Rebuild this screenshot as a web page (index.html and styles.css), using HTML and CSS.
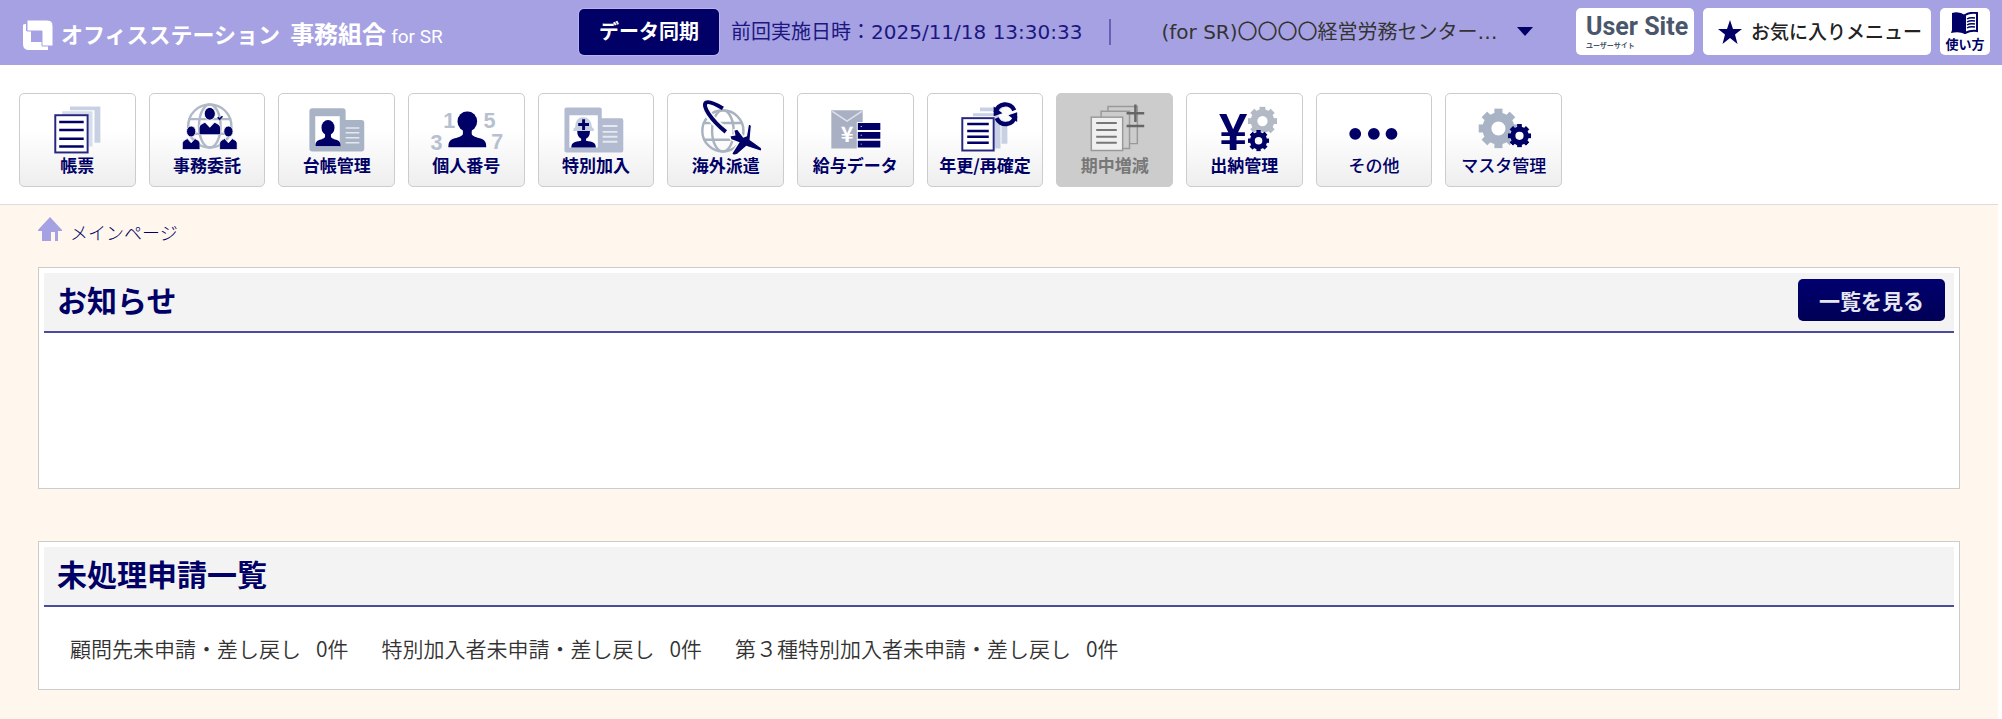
FILE: index.html
```html
<!DOCTYPE html>
<html lang="ja">
  <head>
    <meta charset="UTF-8" />
    <meta name="viewport" content="width=device-width, initial-scale=1.0" />
    <title>オフィスステーション 事務組合</title>
    <link rel="stylesheet" href="styles.css">
  </head>

  <body>
    <svg class="defs" aria-hidden="true">
      <symbol id="gear" viewBox="-20 -20 40 40" overflow="visible">
        <circle r="11.500" fill="none" stroke="currentColor" stroke-width="9" />
        <g fill="currentColor">
          <rect x="-4" y="-20" width="8" height="40" clip-path="url(#teeth)" />
          <rect x="-4" y="-20" width="8" height="40" clip-path="url(#teeth)" transform="rotate(45)" />
          <rect x="-4" y="-20" width="8" height="40" clip-path="url(#teeth)" transform="rotate(90)" />
          <rect x="-4" y="-20" width="8" height="40" clip-path="url(#teeth)" transform="rotate(135)" />
        </g>
      </symbol>
      <clipPath id="teeth">
        <rect x="-20" y="-20" width="40" height="7" />
        <rect x="-20" y="13" width="40" height="7" />
      </clipPath>
      <symbol id="person" viewBox="0 0 39 37" preserveAspectRatio="none">
        <ellipse cx="19.5" cy="10.5" rx="10" ry="10.5" />
        <path d="M15 18v5c0 2-3 3-6 4-6 1-9 3-9 10h39c0-7-3-9-9-10-3-1-6-2-6-4v-5z" />
      </symbol>
      <symbol id="worker" viewBox="0 0 21 28" preserveAspectRatio="none">
        <ellipse cx="10.5" cy="6.5" rx="5.5" ry="6.5" />
        <path d="M0 28v-7c0-3 2-4 6-6l4.500 5 4.500-5c4 2 6 3 6 6v7z" />
      </symbol>
    </svg>

    <header class="header">
      <a class="logo" href="#">
        <svg class="logo-mark" viewBox="0 0 30 30" aria-hidden="true">
          <path fill="#fff" d="M3 4v7h5v11h11v3h6v5H6q-6 0-6-6V5q0-1 3-1z" />
          <path fill="#fff" stroke="#a6a1e2" d="M4 0h20q6 0 6 6v20H19V11H4z" />
        </svg>
        <span class="logo-kana">オフィスステーション</span>
        <span class="logo-kanji">事務組合</span>
        <span class="logo-sub">for SR</span>
      </a>

      <div class="sync">
        <button type="button" class="sync-button">データ同期</button>
        <span class="sync-date">前回実施日時：2025/11/18 13:30:33</span>
      </div>

      <div class="office">
        <select class="office-select" aria-label="事務所">
          <option>(for SR)〇〇〇〇経営労務センター…</option>
        </select>
        <svg class="office-arrow" viewBox="0 0 16 9" aria-hidden="true"><path d="M0 0h16L8 9z" /></svg>
      </div>

      <div class="tools">
        <a class="tool user-site" href="#">
          <span class="user-site-en">User Site</span>
          <span class="user-site-ja">ユーザーサイト</span>
        </a>
        <button type="button" class="tool favorite">
          <svg class="star" viewBox="0 0 24 24" aria-hidden="true"><path d="M12 0l3 9h9l-7 5.500 2.500 9.500-7.500-6-7.500 6L7 14.500 0 9h9z" /></svg>
          お気に入りメニュー
        </button>
        <a class="tool guide" href="#">
          <svg class="book" viewBox="0 0 28 22" aria-hidden="true">
            <path d="M14 3Q8-1 1 1v17l-1 3q8-2 14 1z" />
            <path fill="#fff" stroke="#000066" stroke-width="2" d="M14 3q5-3 12-2v18q-6-1-12 2z" />
            <path fill="none" stroke="#000066" stroke-width="1.500" d="M16 7q3-2 8-1M16 10q3-2 8-1M16 13q3-2 8-1M16 16q3-2 8-1" />
          </svg>
          使い方
        </a>
      </div>
    </header>

    <nav class="menu">
      <a class="menu-item" href="#">
        <svg class="menu-icon" viewBox="0 0 117 56" aria-hidden="true">
          <path fill="#c8d1e4" d="M51 8h31v37h-6V12H51z" />
          <path fill="#d6ddeb" d="M43 13h31v36h-4V17H43z" />
          <rect x="36" y="17" width="33" height="38" fill="#fff" stroke="#26267f" stroke-width="2" />
          <path stroke="#000066" stroke-width="2.500" d="M40 24h25M40 32h25M40 41h25M40 49h25" />
        </svg>
        帳票
      </a>
      <a class="menu-item" href="#">
        <svg class="menu-icon" viewBox="0 0 117 56" aria-hidden="true">
          <g fill="none" stroke="#b0b9c8" stroke-width="2.500">
            <circle cx="61" cy="28" r="22" />
            <ellipse cx="61" cy="28" rx="11" ry="22" />
            <path d="M39 21h44M39 36h44" />
          </g>
          <g fill="#000066" stroke="#fafafa" stroke-width="1">
            <use href="#worker" x="50" y="9" width="22" height="28" />
            <use href="#worker" x="33" y="28" width="18" height="24" />
            <use href="#worker" x="71" y="28" width="18" height="24" />
          </g>
          <path fill="none" stroke="#000066" stroke-width="1.500" d="M69 19l2 2 3-3" />
        </svg>
        事務委託
      </a>
      <a class="menu-item" href="#">
        <svg class="menu-icon" viewBox="0 0 117 56" aria-hidden="true">
          <path fill="#a9b3c6" d="M34 10h31q3 0 3 3v9h16q3 0 3 3v26q0 3-3 3H34q-3 0-3-3V13q0-3 3-3z" />
          <path fill="#fff" d="M37 18h25v31H37z" />
          <path stroke="#e4e8ef" stroke-width="1.500" d="M68 30h14M68 35h14M68 40h14M68 45h14" />
          <use href="#person" fill="#000066" x="37" y="22" width="26" height="27" />
        </svg>
        台帳管理
      </a>
      <a class="menu-item" href="#">
        <svg class="menu-icon" viewBox="0 0 117 56" aria-hidden="true">
          <g class="icon-digits">
            <text x="41" y="30">1</text>
            <text x="82" y="30">5</text>
            <text x="28" y="52">3</text>
            <text x="90" y="51">7</text>
          </g>
          <use href="#person" fill="#000066" x="40" y="13" width="39" height="37" />
        </svg>
        個人番号
      </a>
      <a class="menu-item" href="#">
        <svg class="menu-icon" viewBox="0 0 117 56" aria-hidden="true">
          <path fill="#b3bbd0" d="M28 9h34q2 0 2 2v9h20q2 0 2 2v31q0 2-2 2H28q-2 0-2-2V11q0-2 2-2z" />
          <path fill="#fff" d="M31 17h29v33H31z" />
          <path stroke="#e6e9f0" stroke-width="2" d="M65 28h15M65 34h15M65 39h15M65 44h15" />
          <path fill="#c5cfe0" d="M35 33v-2l2-2q0-10 8-10t9 10l2 2v2z" />
          <path stroke="#000066" stroke-width="3" d="M45.500 21v11M40 26.500h11" />
          <path fill="#000066" d="M39 33h13q0 6-4 8v2c7 1 10 2 10 7H33c0-5 3-6 10-7v-2q-4-2-4-8z" />
        </svg>
        特別加入
      </a>
      <a class="menu-item" href="#">
        <svg class="menu-icon" viewBox="0 0 117 56" aria-hidden="true">
          <g fill="none" stroke="#a9b3c0" stroke-width="2.500">
            <circle cx="56" cy="33" r="21" />
            <ellipse cx="56" cy="33" rx="11" ry="21" />
            <path d="M36 25h40M36 42h40" />
          </g>
          <path fill="none" stroke="#fafafa" stroke-width="8" d="M38 8q2 12 21 25" />
          <path fill="none" stroke="#000066" stroke-width="4" d="M59 34C44 22 34 7 39 4q4-2 17 6" />
          <path fill="#000066" stroke="#fafafa" stroke-width="1.500" d="M82 26q4 0 3 4l-1 12 10 7q3 2 1 5l-15-5-9 8q-5 2-6-1l7-11-8-3-1-4 5-1-1-5 4-1 6 8 3-1z" />
        </svg>
        海外派遣
      </a>
      <a class="menu-item" href="#">
        <svg class="menu-icon" viewBox="0 0 117 56" aria-hidden="true">
          <path fill="#a9b0c4" d="M34 12h32v39H34z" />
          <path fill="none" stroke="#dfe2ea" stroke-width="1.500" d="M35 13l15 10 15-10" />
          <text class="icon-yen-small" x="50" y="44">¥</text>
          <path fill="#fff" d="M60 24h25v28H60z" />
          <path fill="#000066" d="M61 25h23v7H61zM61 34h23v7H61zM61 43h23v7H61z" />
          <path fill="#fff" d="M64 28h1v1h-1zM64 37h1v1h-1zM64 46h1v1h-1z" />
        </svg>
        給与データ
      </a>
      <a class="menu-item" href="#">
        <svg class="menu-icon" viewBox="0 0 117 56" aria-hidden="true">
          <path fill="#c8d1e4" d="M53 9h28v37h-6V13H53z" />
          <path fill="#c8d1e4" d="M46 15h28v36h-6V18H46z" />
          <rect x="35" y="20" width="32" height="33" fill="#fff" stroke="#26267f" stroke-width="2" />
          <path stroke="#000066" stroke-width="2.500" d="M40 26h22M40 33h22M40 39h22M40 45h22" />
          <circle cx="79" cy="16" r="7" fill="#fafafa" />
          <path fill="none" stroke="#000066" stroke-width="4.500" d="M69 14a10 10 0 0 1 19-2M89 18a10 10 0 0 1-19 2" />
          <path fill="#000066" d="M67 8v10l9-3zM91 24V14l-9 3z" />
        </svg>
        年更/再確定
      </a>
      <a class="menu-item disabled" aria-disabled="true">
        <svg class="menu-icon" viewBox="0 0 117 56" aria-hidden="true">
          <g fill="none" stroke="#999" stroke-width="1.500">
            <path d="M52 13V8h30v38h-8" />
            <path d="M45 19v-6h29v38h-7" />
            <rect x="35" y="19" width="32" height="34" fill="#f0f0f0" />
          </g>
          <path stroke="#777" stroke-width="2" d="M40 25h21M40 32h21M40 39h21M40 45h21" />
          <path stroke="#666" stroke-width="2.500" d="M71 15h18M80 6v18M71 28h18" />
        </svg>
        期中増減
      </a>
      <a class="menu-item" href="#">
        <svg class="menu-icon" viewBox="0 0 117 56" aria-hidden="true">
          <text class="icon-yen" x="47" y="53">¥</text>
          <use href="#gear" color="#b3bac6" x="62" y="8" width="30" height="30" />
          <circle cx="73" cy="43" r="10" fill="#fafafa" />
          <use href="#gear" color="#000066" x="62" y="32" width="22" height="22" />
        </svg>
        出納管理
      </a>
      <a class="menu-item light" href="#">
        <svg class="menu-icon" viewBox="0 0 117 56" aria-hidden="true">
          <g fill="#000066">
            <circle cx="39" cy="36" r="6" />
            <circle cx="58" cy="36" r="6" />
            <circle cx="76" cy="36" r="6" />
          </g>
        </svg>
        その他
      </a>
      <a class="menu-item light" href="#">
        <svg class="menu-icon" viewBox="0 0 117 56" aria-hidden="true">
          <use href="#gear" color="#a9b3c6" x="33" y="10" width="41" height="41" />
          <circle cx="75" cy="38" r="10" fill="#fafafa" />
          <use href="#gear" color="#000066" x="63" y="26" width="24" height="24" />
        </svg>
        マスタ管理
      </a>
    </nav>

    <main class="main">
      <div class="breadcrumb">
        <svg class="home" viewBox="0 0 24 24" aria-hidden="true"><path d="M12 0l12 13v1h-4v10h-3V15h-4v9H4V14H0v-1z" /></svg>
        <a href="#">メインページ</a>
      </div>

      <section class="panel">
        <div class="panel-head">
          <h2>お知らせ</h2>
          <button type="button" class="list-button">一覧を見る</button>
        </div>
        <div class="panel-body news"></div>
      </section>

      <section class="panel">
        <div class="panel-head">
          <h2>未処理申請一覧</h2>
        </div>
        <ul class="panel-body pending">
          <li>顧問先未申請・差し戻し<span class="count">0件</span></li>
          <li>特別加入者未申請・差し戻し<span class="count">0件</span></li>
          <li>第３種特別加入者未申請・差し戻し<span class="count">0件</span></li>
        </ul>
      </section>
    </main>
  </body>
</html>
```

FILE: styles.css
```css
* {
  box-sizing: border-box;
}

html {
  background-color: #fff;
}

body {
  margin: 0;
  min-height: 100vh;
  display: flex;
  flex-direction: column;
  font-family: "Noto Sans CJK JP", sans-serif;
  color: #333;
}

a {
  color: #000066;
  text-decoration: none;
}

button {
  font-family: inherit;
  cursor: pointer;
}

.defs {
  position: absolute;
  width: 0;
  height: 0;
}

/* header */
.header {
  display: flex;
  align-items: center;
  height: 65px;
  padding: 0 12px 2px 23px;
  background-color: #a6a1e2;
  white-space: nowrap;
}

.logo {
  display: flex;
  align-items: baseline;
  width: 556px;
  padding-top: 6px;
  color: #fff;
  font-weight: bold;
  line-height: 36px;
}

.logo-mark {
  width: 30px;
  height: 30px;
  margin-right: 8px;
  align-self: center;
}

.logo-kana {
  font-size: 22px;
  margin-right: 10px;
}

.logo-kanji {
  font-size: 24px;
  margin-right: 5px;
}

.logo-sub {
  font-family: Roboto, sans-serif;
  font-size: 19px;
  font-weight: normal;
}

.sync {
  display: flex;
  align-items: center;
  gap: 12px;
  color: #1c1780;
}

.sync-button {
  width: 140px;
  height: 46px;
  padding: 0 0 3px;
  border: none;
  border-radius: 5px;
  background-color: #000066;
  box-shadow: 0 0 0 1px #b9b5ea;
  color: #fff;
  font-size: 20px;
  font-weight: bold;
}

.sync-date {
  padding-right: 27px;
  border-right: 2px solid #6661b8;
  font-family: "DejaVu Sans", "Noto Sans CJK JP", sans-serif;
  font-size: 20px;
  line-height: 26px;
}

.office {
  display: flex;
  align-items: center;
  margin-left: 50px;
}

.office-select {
  width: 356px;
  padding: 0;
  border: none;
  appearance: none;
  background: none;
  color: #333;
  font-family: "DejaVu Sans", "Noto Sans CJK JP", sans-serif;
  font-size: 20px;
  line-height: 30px;
}

.office-arrow {
  width: 16px;
  height: 9px;
  fill: #000066;
}

.tools {
  display: flex;
  gap: 9px;
  margin-left: auto;
}

.tool {
  display: flex;
  height: 47px;
  border: none;
  border-radius: 5px;
  background-color: #fff;
}

.user-site {
  width: 118px;
  padding: 4px 10px;
  flex-direction: column;
  color: #4a566b;
  font-weight: bold;
}

.user-site-en {
  font-family: Roboto, sans-serif;
  font-size: 25px;
  line-height: 30px;
}

.user-site-ja {
  font-size: 7px;
  line-height: 7px;
}

.favorite {
  width: 228px;
  padding: 0 0 2px 15px;
  align-items: center;
  gap: 9px;
  color: #222;
  font-size: 19px;
  font-weight: 500;
}

.star {
  width: 24px;
  height: 24px;
  margin-top: 2px;
  fill: #000066;
}

.guide {
  width: 50px;
  padding-top: 4px;
  flex-direction: column;
  align-items: center;
  font-size: 13px;
  font-weight: bold;
  line-height: 20px;
}

.book {
  width: 28px;
  height: 22px;
  fill: #000066;
}

/* menu */
.menu {
  display: grid;
  grid-template-columns: repeat(12, 1fr);
  column-gap: 13px;
  max-width: 1581px;
  padding: 28px 19px 17px;
}

.menu-item {
  display: flex;
  flex-direction: column;
  align-items: center;
  height: 94px;
  padding-top: 4px;
  border: 1px solid #ccc;
  border-radius: 5px;
  background: linear-gradient(#fff 40%, #eee);
  font-size: 17px;
  font-weight: bold;
  line-height: 22px;
  white-space: nowrap;
}

.menu-item.light {
  font-weight: 500;
}

.menu-item.disabled {
  background: #ccc;
  color: #777;
}

.menu-icon {
  width: 100%;
  height: 56px;
  overflow: visible;
}

.icon-digits {
  fill: #b8c0d0;
  font-size: 22px;
  font-family: "Liberation Sans", sans-serif;
  text-anchor: middle;
}

.icon-yen {
  fill: #000066;
  font-size: 52px;
  font-family: "Liberation Sans", sans-serif;
  text-anchor: middle;
}

.icon-yen-small {
  fill: #fff;
  font-size: 22px;
  text-anchor: middle;
}

/* main */
.main {
  flex: 1;
  margin-right: 4px;
  padding: 12px 38px 29px;
  border-top: 1px solid #ddd;
  background-color: #fff7ed;
}

.breadcrumb {
  display: flex;
  align-items: flex-start;
  gap: 8px;
  height: 50px;
  font-size: 18px;
  font-weight: 300;
  line-height: 30px;
}

.home {
  width: 24px;
  height: 24px;
  fill: #a6a1e2;
}

.panel {
  padding: 5px;
  border: 1px solid #ccc;
  background-color: #fff;
}

.panel + .panel {
  margin-top: 52px;
}

.panel-head {
  display: flex;
  align-items: center;
  justify-content: space-between;
  height: 60px;
  padding: 0 9px 5px 13px;
  border-bottom: 2px solid #4c4c9c;
  background-color: #f3f3f3;
}

.panel-head h2 {
  margin: 0;
  padding-bottom: 2px;
  color: #000066;
  font-size: 30px;
  line-height: 40px;
}

.list-button {
  width: 147px;
  height: 42px;
  padding: 0;
  border: none;
  border-radius: 5px;
  background: linear-gradient(#000070, #000055);
  color: #e6e6f0;
  font-size: 21px;
  font-weight: bold;
}

.news {
  min-height: 150px;
}

.pending {
  display: flex;
  flex-wrap: wrap;
  gap: 33px;
  margin: 0;
  padding: 25px 26px 20px;
  list-style: none;
  font-size: 21px;
  font-weight: 350;
  line-height: 32px;
}

.count {
  margin-left: 15px;
}
```
